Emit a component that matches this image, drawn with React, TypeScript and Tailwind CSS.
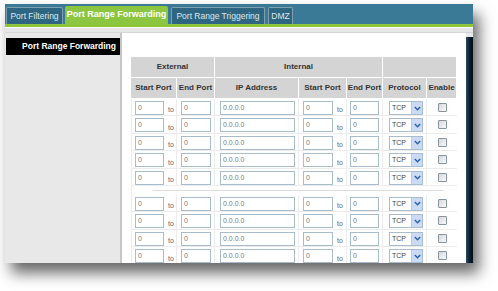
import React from "react";

function Box({ w, text }: { w: string; text: string }) {
  return (
    <div
      className={`${w} h-[14px] shrink-0 border border-[#a9bccd] bg-white pl-[2px] text-[7px] leading-[12px] text-[#7a7a7a]`}
    >
      {text}
    </div>
  );
}

function To() {
  return <span className="ml-[4px] self-end mb-[1px] text-[7px] leading-[9px] text-[#666]">to</span>;
}

function Select() {
  return (
    <div className="flex h-[14px] w-[34px] border border-[#a9bccd] bg-white">
      <span className="flex-1 pl-[2px] text-[7px] leading-[12px] text-[#444]">TCP</span>
      <div className="flex w-[11px] items-center justify-center border-l border-[#b7cbe6] bg-[#c9dbf5]">
        <svg width="7" height="5" viewBox="0 0 7 5">
          <path d="M0.8 1 L3.5 3.8 L6.2 1" fill="none" stroke="#2c5fb0" strokeWidth="1.4" />
        </svg>
      </div>
    </div>
  );
}

function Check() {
  return (
    <div className="h-[9px] w-[9px] rounded-[1px] border border-[#8693a3] bg-gradient-to-br from-[#d9d9d9] to-[#f9f9f9]" />
  );
}

function DataRow() {
  return (
    <div className="grid h-[17.4px] grid-cols-[46px_38px_84px_48px_36px_44px_30px]">
      <div className="flex items-start border-r border-b border-l border-[#ececec] pl-[3px] pt-[2px]">
        <Box w="w-[29px]" text="0" />
        <To />
      </div>
      <div className="flex items-start border-r border-b border-[#ececec] pl-[4px] pt-[2px]">
        <Box w="w-[30px]" text="0" />
      </div>
      <div className="flex items-start border-r border-b border-[#ececec] pl-[5px] pt-[2px]">
        <Box w="w-[75px]" text="0.0.0.0" />
      </div>
      <div className="flex items-start border-r border-b border-[#ececec] pl-[4px] pt-[2px]">
        <Box w="w-[30px]" text="0" />
        <To />
      </div>
      <div className="flex items-start border-r border-b border-[#ececec] pl-[3px] pt-[2px]">
        <Box w="w-[29px]" text="0" />
      </div>
      <div className="flex items-start border-r border-b border-[#ececec] pl-[6px] pt-[2px]">
        <Select />
      </div>
      <div className="flex items-start justify-center border-b border-[#ececec] pt-[4px]">
        <Check />
      </div>
    </div>
  );
}

export default function App() {
  const hcell =
    "flex items-center justify-center border-r border-b border-white bg-[#d4d4d4] text-[8px] font-bold text-[#333]";
  return (
    <div className="h-[291px] w-[498px] overflow-hidden bg-white font-['Liberation_Sans',Arial,sans-serif]">
      <div className="ml-[5px] mt-[4px] flex h-[259px] w-[468px] flex-col overflow-hidden bg-[#e8e8e8] shadow-[6px_10px_14px_rgba(0,0,0,0.6)]">
        {/* tab bar */}
        <div className="flex h-[20px] items-end bg-[#3a7a96] pl-[1px]">
          <div className="flex h-[17px] w-[57px] items-center justify-center rounded-t-[2px] border border-b-0 border-[#7e9fb0] bg-[#2e6681] text-[8.5px] text-[#dfe8ec]">
            Port Filtering
          </div>
          <div className="ml-[2px] flex h-[18px] w-[103px] items-center justify-center rounded-t-[2px] bg-[#8cc53f] text-[9px] font-semibold text-white">
            Port Range Forwarding
          </div>
          <div className="ml-[3px] flex h-[17px] w-[94px] items-center justify-center rounded-t-[2px] border border-b-0 border-[#7e9fb0] bg-[#2e6681] text-[8.5px] text-[#dfe8ec]">
            Port Range Triggering
          </div>
          <div className="ml-[3px] flex h-[17px] w-[25px] items-center justify-center rounded-t-[2px] border border-b-0 border-[#7e9fb0] bg-[#2e6681] text-[8.5px] text-[#dfe8ec]">
            DMZ
          </div>
        </div>
        <div className="h-[3px] bg-[#8cc43c]" />
        <div className="h-[1px] bg-white" />
        <div className="h-[5px] border-b border-[#d6d6d6] bg-[#e6e6e6]" />
        {/* body */}
        <div className="flex min-h-0 flex-1">
          <div className="w-[115px] bg-[#e8e8e8] pt-[5px]">
            <div className="ml-[1px] flex h-[17px] items-center justify-end bg-black pr-[4px] text-[8.5px] font-bold text-white">
              Port Range Forwarding
            </div>
          </div>
          <div className="w-[2px] bg-[#c6c6c6]" />
          <div className="w-[344px] overflow-hidden bg-white pl-[9px] pt-[24px]">
            <div className="w-[326px]">
              <div className="grid h-[21px] grid-cols-[84px_168px_74px]">
                <div className={hcell}>External</div>
                <div className={hcell}>Internal</div>
                <div className={hcell}></div>
              </div>
              <div className="grid h-[21px] grid-cols-[46px_38px_84px_48px_36px_44px_30px]">
                <div className={hcell}>Start Port</div>
                <div className={hcell}>End Port</div>
                <div className={hcell}>IP Address</div>
                <div className={hcell}>Start Port</div>
                <div className={hcell}>End Port</div>
                <div className={hcell}>Protocol</div>
                <div className={hcell}>Enable</div>
              </div>
              <DataRow />
              <DataRow />
              <DataRow />
              <DataRow />
              <DataRow />
              <div className="flex h-[9px] items-center border-l border-[#ececec] pl-[21px] pr-[13px]">
                <div className="h-[1px] w-full bg-[#dcdcdc]" />
              </div>
              <DataRow />
              <DataRow />
              <DataRow />
              <DataRow />
            </div>
          </div>
          <div className="mt-[4px] w-[7px] bg-gradient-to-r from-[#2a4d66] via-[#0c1f2e] to-[#050d14]" />
        </div>
      </div>
    </div>
  );
}
